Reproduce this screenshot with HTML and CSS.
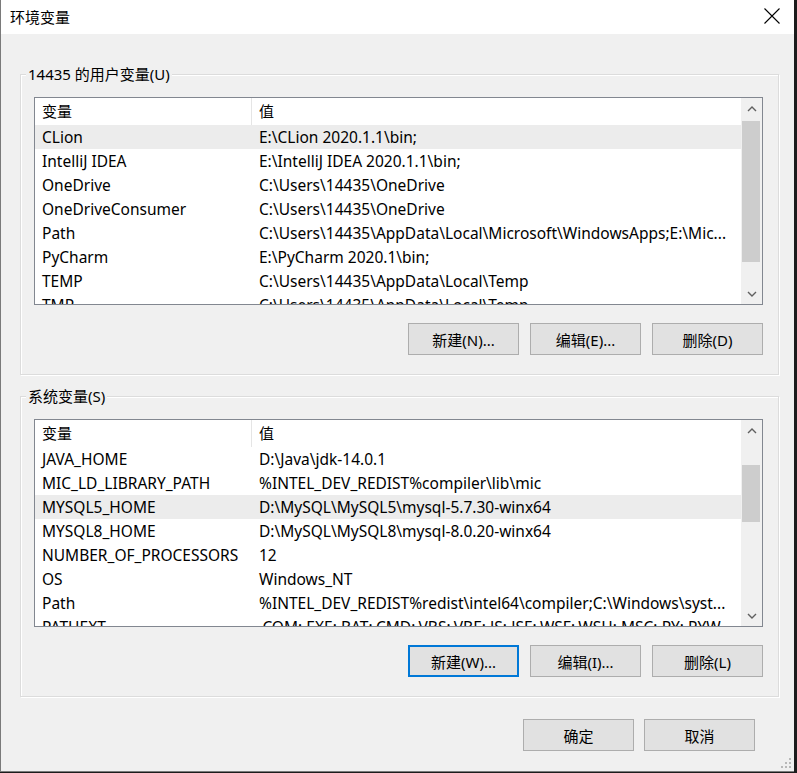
FILE: index.html
```html
<!DOCTYPE html>
<html lang="zh-CN">
<head>
  <meta charset="UTF-8" />
  <title>环境变量</title>
  <link rel="stylesheet" href="styles.css">
</head>
<body>

  <div class="window">
    <div class="titlebar">
      <span class="title">环境变量</span>
      <svg class="close" width="16" height="16" viewBox="0 0 16 16">
        <path d="M0.5 0.5 L15.5 15.5 M15.5 0.5 L0.5 15.5" stroke="#000" stroke-width="1.1" fill="none"/>
      </svg>
    </div>

    <div class="content">
      <fieldset class="group">
        <legend>14435 的用户变量(U)</legend>
        <div class="list">
          <div class="list-body">
            <div class="list-head"><span class="cell name">变量</span><span class="cell">值</span></div>
            <div class="row hot"><span class="cell name">CLion</span><span class="cell">E:\CLion 2020.1.1\bin;</span></div>
            <div class="row"><span class="cell name">IntelliJ IDEA</span><span class="cell">E:\IntelliJ IDEA 2020.1.1\bin;</span></div>
            <div class="row"><span class="cell name">OneDrive</span><span class="cell">C:\Users\14435\OneDrive</span></div>
            <div class="row"><span class="cell name">OneDriveConsumer</span><span class="cell">C:\Users\14435\OneDrive</span></div>
            <div class="row"><span class="cell name">Path</span><span class="cell">C:\Users\14435\AppData\Local\Microsoft\WindowsApps;E:\Mic...</span></div>
            <div class="row"><span class="cell name">PyCharm</span><span class="cell">E:\PyCharm 2020.1\bin;</span></div>
            <div class="row"><span class="cell name">TEMP</span><span class="cell">C:\Users\14435\AppData\Local\Temp</span></div>
            <div class="row"><span class="cell name">TMP</span><span class="cell">C:\Users\14435\AppData\Local\Temp</span></div>
          </div>
          <div class="scrollbar">
            <span class="arrow"><svg width="10" height="6" viewBox="0 0 10 6"><path d="M1 5 L5 1 L9 5" stroke="#606060" stroke-width="1.4" fill="none"/></svg></span>
            <div class="track"><div class="thumb" style="margin-top: 2px; height: 141px;"></div></div>
            <span class="arrow"><svg width="10" height="6" viewBox="0 0 10 6"><path d="M1 1 L5 5 L9 1" stroke="#606060" stroke-width="1.4" fill="none"/></svg></span>
          </div>
        </div>
        <div class="btn-row">
          <button class="btn">新建(N)...</button>
          <button class="btn">编辑(E)...</button>
          <button class="btn">删除(D)</button>
        </div>
      </fieldset>

      <fieldset class="group second">
        <legend>系统变量(S)</legend>
        <div class="list">
          <div class="list-body">
            <div class="list-head"><span class="cell name">变量</span><span class="cell">值</span></div>
            <div class="row"><span class="cell name">JAVA_HOME</span><span class="cell">D:\Java\jdk-14.0.1</span></div>
            <div class="row"><span class="cell name">MIC_LD_LIBRARY_PATH</span><span class="cell">%INTEL_DEV_REDIST%compiler\lib\mic</span></div>
            <div class="row hot"><span class="cell name">MYSQL5_HOME</span><span class="cell">D:\MySQL\MySQL5\mysql-5.7.30-winx64</span></div>
            <div class="row"><span class="cell name">MYSQL8_HOME</span><span class="cell">D:\MySQL\MySQL8\mysql-8.0.20-winx64</span></div>
            <div class="row"><span class="cell name">NUMBER_OF_PROCESSORS</span><span class="cell">12</span></div>
            <div class="row"><span class="cell name">OS</span><span class="cell">Windows_NT</span></div>
            <div class="row"><span class="cell name">Path</span><span class="cell">%INTEL_DEV_REDIST%redist\intel64\compiler;C:\Windows\syst...</span></div>
            <div class="row"><span class="cell name">PATHEXT</span><span class="cell">.COM;.EXE;.BAT;.CMD;.VBS;.VBE;.JS;.JSE;.WSF;.WSH;.MSC;.PY;.PYW</span></div>
          </div>
          <div class="scrollbar">
            <span class="arrow"><svg width="10" height="6" viewBox="0 0 10 6"><path d="M1 5 L5 1 L9 5" stroke="#606060" stroke-width="1.4" fill="none"/></svg></span>
            <div class="track"><div class="thumb" style="margin-top: 24px; height: 57px;"></div></div>
            <span class="arrow"><svg width="10" height="6" viewBox="0 0 10 6"><path d="M1 1 L5 5 L9 1" stroke="#606060" stroke-width="1.4" fill="none"/></svg></span>
          </div>
        </div>
        <div class="btn-row">
          <button class="btn focus">新建(W)...</button>
          <button class="btn">编辑(I)...</button>
          <button class="btn">删除(L)</button>
        </div>
      </fieldset>

      <div class="footer">
        <button class="btn">确定</button>
        <button class="btn">取消</button>
      </div>
    </div>

    <svg class="grip" width="12" height="12" viewBox="0 0 12 12">
      <rect x="9" y="1" width="2" height="2" fill="#b8b8b8"/>
      <rect x="5" y="5" width="2" height="2" fill="#b8b8b8"/>
      <rect x="9" y="5" width="2" height="2" fill="#b8b8b8"/>
      <rect x="1" y="9" width="2" height="2" fill="#b8b8b8"/>
      <rect x="5" y="9" width="2" height="2" fill="#b8b8b8"/>
      <rect x="9" y="9" width="2" height="2" fill="#b8b8b8"/>
    </svg>
  </div>

</body>
</html>
```

FILE: styles.css
```css
* {
  box-sizing: border-box;
}

body {
  margin: 0;
  background-color: #1c1c1c;
  font-family: "Noto Sans", "Noto Sans CJK SC", sans-serif;
  font-size: 15px;
  color: #000;
}

.window {
  position: relative;
  width: 794px;
  height: 772px;
  background-color: #f0f0f0;
  border-left: 1px solid #7a7a7a;
  border-bottom: 1px solid #7a7a7a;
  display: flex;
  flex-direction: column;
}

.titlebar {
  height: 34px;
  background-color: #fff;
  display: flex;
  align-items: center;
  justify-content: space-between;
  padding: 0 14px 2px 9px;
}

.title {
  font-size: 15px;
  line-height: 20px;
  margin-top: 2px;
}

.content {
  flex: 1;
  display: flex;
  flex-direction: column;
  padding: 30px 15px 0 19px;
}

.group {
  margin: 0;
  padding: 13px 15px 19px 13px;
  min-width: 0;
  border: 1px solid #dcdcdc;
  box-shadow: inset 1px 1px 0 #fff, 1px 1px 0 #fff;
}

.group.second {
  margin-top: 11px;
}

.group legend {
  margin-left: -8px;
  padding: 0 2px;
  line-height: 20px;
  background-color: #f0f0f0;
}

.list {
  display: flex;
  height: 208px;
  border: 1px solid #828790;
  background-color: #fff;
}

.list-body {
  flex: 1;
  min-width: 0;
  overflow: hidden;
}

.list-head,
.row {
  display: grid;
  grid-template-columns: 217px 1fr;
}

.list-head {
  height: 27px;
  line-height: 27px;
}

.list-head .name {
  border-right: 1px solid #e5e5e5;
}

.row {
  height: 24px;
  line-height: 24px;
  font-size: 15.5px;
}

.row.hot {
  background-color: #ececec;
}

.cell {
  padding: 0 7px;
  white-space: nowrap;
  overflow: hidden;
  text-overflow: ellipsis;
}

.scrollbar {
  width: 21px;
  display: flex;
  flex-direction: column;
  background-color: #f0f0f0;
}

.arrow {
  height: 21px;
  display: flex;
  align-items: center;
  justify-content: center;
}

.track {
  flex: 1;
  padding: 0 2px 0 1px;
}

.thumb {
  background-color: #cdcdcd;
}

.btn-row {
  display: flex;
  justify-content: flex-end;
  gap: 11px;
  margin-top: 18px;
}

.btn {
  width: 111px;
  height: 32px;
  padding: 0;
  border: 1px solid #adadad;
  background-color: #e1e1e1;
  font-family: inherit;
  font-size: 15px;
  color: #000;
}

.btn.focus {
  border: 2px solid #0078d7;
}

.footer {
  display: flex;
  justify-content: flex-end;
  gap: 10px;
  margin-top: 22px;
  padding-right: 24px;
}

.grip {
  position: absolute;
  right: 2px;
  bottom: 2px;
}
```
